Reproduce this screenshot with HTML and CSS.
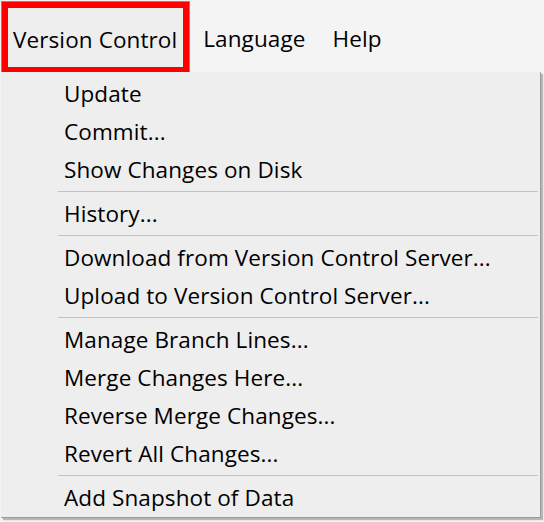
FILE: index.html
```html
<!DOCTYPE html>
<html>
<head>
<meta charset="utf-8">
<link rel="stylesheet" href="styles.css">
</head>
<body>
<div class="menubar">
  <div class="bar-item active"><span class="hl">Version Control</span></div>
  <div class="bar-item">Language</div>
  <div class="bar-item">Help</div>
</div>
<div class="dropdown">
  <div class="row">Update</div>
  <div class="row">Commit...</div>
  <div class="row">Show Changes on Disk</div>
  <div class="sep"></div>
  <div class="row">History...</div>
  <div class="sep"></div>
  <div class="row">Download from Version Control Server...</div>
  <div class="row">Upload to Version Control Server...</div>
  <div class="sep"></div>
  <div class="row">Manage Branch Lines...</div>
  <div class="row">Merge Changes Here...</div>
  <div class="row">Reverse Merge Changes...</div>
  <div class="row">Revert All Changes...</div>
  <div class="sep"></div>
  <div class="row">Add Snapshot of Data</div>
</div>
</body>
</html>
```
FILE: styles.css
```css
html, body {
  margin: 0;
  padding: 0;
  background: #f4f4f4;
  width: 544px;
  height: 522px;
  overflow: hidden;
  font-family: "Open Sans", "Noto Sans", sans-serif;
  font-size: 22.5px;
  letter-spacing: 0.1px;
  color: #000;
}
.menubar {
  display: flex;
  align-items: stretch;
  height: 72px;
  padding: 1px 0 0 1px;
  box-sizing: border-box;
  background: #f4f4f4;
}
.bar-item {
  display: flex;
  align-items: center;
  padding: 5px 14px 0 13px;
  line-height: 1;
}
.bar-item.active {
  padding: 0;
  border: 1px solid #8a8a8a;
  border-bottom: none;
  background: #eeeeee;
}
.hl {
  display: flex;
  align-items: center;
  align-self: stretch;
  border: 6px solid #ff0000;
  border-bottom-width: 5px;
  padding: 5px 6px 0 5px;
  background: #eeeeee;
}
.dropdown {
  margin-left: 1px;
  width: 540px;
  height: 446px;
  background: #eeeeee;
  border-right: 1px solid #9a9a9a;
  border-bottom: 1px solid #9a9a9a;
  box-shadow: 2px 2px 1px rgba(0, 0, 0, 0.25);
  padding-top: 3px;
  box-sizing: border-box;
}
.row {
  height: 38px;
  display: flex;
  align-items: center;
  padding: 0 0 2px 63px;
  box-sizing: border-box;
  white-space: nowrap;
}
.sep {
  height: 6px;
  display: flex;
  flex-direction: column;
  padding-top: 2px;
  box-sizing: border-box;
}
.sep::before {
  content: "";
  display: block;
  height: 1px;
  margin-left: 57px;
  margin-right: 2px;
  background: #c2c2c2;
}
```
